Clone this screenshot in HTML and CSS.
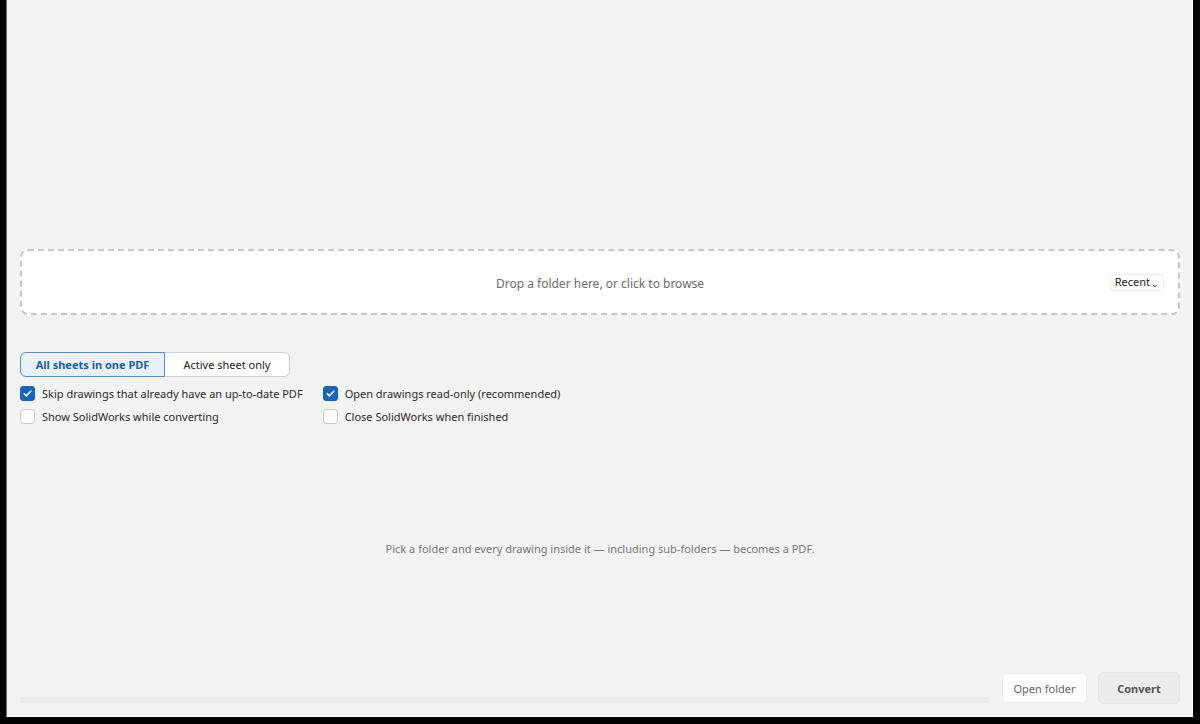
FILE: index.html
```html
<!DOCTYPE html>
<html lang="en">

<head>
    <meta charset="UTF-8">
    <meta name="viewport" content="width=device-width, initial-scale=1.0">
    <title>Drawings to PDF</title>
    <link rel="stylesheet" href="styles.css">
</head>

<body>
    <div class="window">
        <div class="dropzone" id="dropzone">
            <span class="drop-label">Drop a folder here, or click to browse</span>
            <button type="button" class="btn-recent">Recent<span class="chev">&#8964;</span></button>
        </div>

        <div class="segmented">
            <button type="button" class="seg active">All sheets in one PDF</button>
            <button type="button" class="seg">Active sheet only</button>
        </div>

        <div class="options">
            <label class="check"><input type="checkbox" checked><span class="box"></span>Skip drawings that already have an up-to-date PDF</label>
            <label class="check"><input type="checkbox" checked><span class="box"></span>Open drawings read-only (recommended)</label>
            <label class="check"><input type="checkbox"><span class="box"></span>Show SolidWorks while converting</label>
            <label class="check"><input type="checkbox"><span class="box"></span>Close SolidWorks when finished</label>
        </div>

        <div class="hint">
            <p>Pick a folder and every drawing inside it — including sub-folders — becomes a PDF.</p>
        </div>

        <div class="footer">
            <div class="progress"><div class="progress-fill"></div></div>
            <button type="button" class="btn-open">Open folder</button>
            <button type="button" class="btn-convert">Convert</button>
        </div>
    </div>
</body>

</html>
```

FILE: styles.css
```css
body {
    margin: 0;
    background: #000;
    font-family: "Segoe UI", "Noto Sans", Arial, sans-serif;
    font-size: 11px;
    color: #333;
}

.window {
    box-sizing: border-box;
    width: 1187px;
    height: 717px;
    margin-left: 6px;
    padding: 249px 12px 12px 13px;
    background: #f3f3f3;
    border-left: 1px solid #6a6a6a;
    border-right: 1px solid #fbfbfb;
    border-bottom: 1px solid #fbfbfb;
    display: flex;
    flex-direction: column;
}

button {
    font-family: inherit;
    cursor: pointer;
}

/* drop target */
.dropzone {
    position: relative;
    height: 66px;
    box-sizing: border-box;
    background: #fff;
    border: 2px dashed #c6c6c6;
    border-radius: 8px;
    display: flex;
    align-items: center;
    justify-content: center;
}

.drop-label {
    font-size: 12px;
    color: #6b6b6b;
    position: relative;
    top: 1px;
}

.btn-recent {
    position: absolute;
    right: 14px;
    top: 23px;
    height: 17px;
    padding: 0 4px;
    font-size: 11px;
    color: #222;
    background: #fff;
    border: 1px solid #f0f0f0;
    border-radius: 3px;
    line-height: 14px;
}

.chev {
    font-size: 9px;
    margin-left: 1px;
    position: relative;
    top: 1px;
}

/* sheet mode toggle */
.segmented {
    display: flex;
    margin-top: 37px;
    width: 270px;
    height: 25px;
}

.seg {
    height: 25px;
    padding: 0;
    font-size: 11px;
    color: #222;
    background: #fff;
    border: 1px solid #cfcfcf;
}

.seg:first-child {
    width: 145px;
    border-radius: 6px 0 0 6px;
}

.seg:last-child {
    width: 125px;
    border-left: none;
    border-radius: 0 6px 6px 0;
}

.seg.active {
    font-weight: bold;
    color: #1b5fa8;
    background: #e9f1fb;
    border-color: #5b8fcb;
}

/* checkbox options */
.options {
    display: grid;
    grid-template-columns: auto auto;
    justify-content: start;
    column-gap: 20px;
    row-gap: 5px;
    margin-top: 7px;
}

.check {
    display: flex;
    align-items: center;
    height: 18px;
    color: #2b2b2b;
}

.check input {
    display: none;
}

.box {
    width: 13px;
    height: 13px;
    margin-right: 7px;
    background: #fff;
    border: 1px solid #c9c9c9;
    border-radius: 3px;
    flex-shrink: 0;
}

.check input:checked + .box {
    background: #1565c0;
    border-color: #1565c0;
    background-image: url("data:image/svg+xml,%3Csvg xmlns='http://www.w3.org/2000/svg' viewBox='0 0 14 14'%3E%3Cpath d='M3.5 7.2l2.3 2.3 4.7-5' fill='none' stroke='%23fff' stroke-width='1.7' stroke-linecap='round' stroke-linejoin='round'/%3E%3C/svg%3E");
}

.hint {
    flex: 1;
    display: flex;
    align-items: center;
    justify-content: center;
    color: #777;
    font-size: 11px;
}

.hint p {
    margin: 0;
}

/* progress + actions */
.footer {
    display: flex;
    align-items: center;
    height: 32px;
}

.progress {
    flex: 1;
    height: 6px;
    margin-top: 23px;
    margin-right: 12px;
    background: #ebebeb;
    border-radius: 3px;
}

.progress-fill {
    width: 0;
}

.btn-open {
    height: 30px;
    width: 85px;
    font-size: 11px;
    color: #666;
    background: #fff;
    border: 1px solid #ececec;
    border-radius: 5px;
    margin-right: 11px;
}

.btn-convert {
    height: 32px;
    width: 82px;
    font-size: 11px;
    font-weight: bold;
    color: #555;
    background: #ececec;
    border: 1px solid #e6e6e6;
    border-radius: 5px;
}
```
